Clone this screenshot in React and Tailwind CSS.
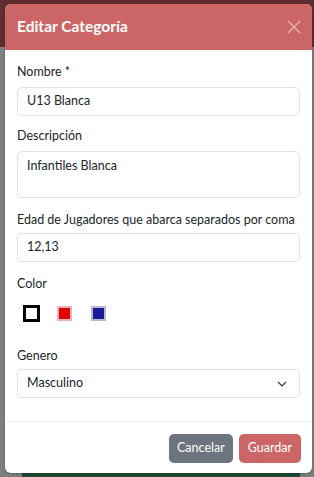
import React from "react";

export default function App() {
  return (
    <div className="relative w-[314px] h-[477px] overflow-hidden bg-[#7f7f7f] font-['Lato',sans-serif]">
      <div className="h-[47px] bg-[#5f2d2d]" />
      <div className="absolute left-[22px] right-[14px] bottom-0 h-[4px] bg-[#1f4a33]" />
      <div className="absolute left-[5px] top-[4px] w-[307px] h-[469px] bg-white rounded-[6px] overflow-hidden flex flex-col shadow-[0_1px_3px_rgba(0,0,0,0.25)]">
        <div className="h-[46px] bg-[#cc6666] flex items-center justify-between pl-[12px] pr-[10px] shrink-0">
          <span className="text-white font-bold text-[15.5px] leading-none">Editar Categoría</span>
          <svg width="14" height="14" viewBox="0 0 14 14" className="mr-[1px]">
            <path d="M1 1L13 13M13 1L1 13" stroke="#e9b3b3" strokeWidth="1.4" />
          </svg>
        </div>
        <div className="flex flex-col px-[12px] pt-[12px] text-[12.5px] text-[#212529]">
          <label className="leading-[20px]">Nombre *</label>
          <div className="mt-[5px] h-[29px] border border-[#dee2e6] rounded-[5px] px-[9px] flex items-center">U13 Blanca</div>
          <label className="mt-[10px] leading-[20px]">Descripción</label>
          <div className="mt-[5px] h-[47px] border border-[#dee2e6] rounded-[5px] px-[9px] pt-[5px]">Infantiles Blanca</div>
          <label className="mt-[12px] leading-[20px]">Edad de Jugadores que abarca separados por coma</label>
          <div className="mt-[3px] h-[29px] border border-[#dee2e6] rounded-[5px] px-[9px] flex items-center">12,13</div>
          <label className="mt-[12px] leading-[20px]">Color</label>
          <div className="mt-[11px] flex items-center h-[17px] pl-[6px]">
            <div className="w-[17px] h-[17px] border-[3px] border-black bg-white" />
            <div className="ml-[17px] w-[15px] h-[15px] border-2 border-[#e8b4b4] bg-[#e00000]" />
            <div className="ml-[19px] w-[15px] h-[15px] border-2 border-[#b8b8d0] bg-[#1a1a99]" />
          </div>
          <label className="mt-[24px] leading-[20px]">Genero</label>
          <div className="mt-[3px] h-[29px] border border-[#dee2e6] rounded-[5px] pl-[9px] pr-[12px] flex items-center justify-between">
            <span>Masculino</span>
            <svg width="10" height="6" viewBox="0 0 10 6">
              <path d="M1 1L5 5L9 1" stroke="#333" strokeWidth="1.2" fill="none" />
            </svg>
          </div>
        </div>
        <div className="mt-[23px] border-t border-[#eceeef]" />
        <div className="flex justify-end gap-[6px] px-[11px] pt-[12px]">
          <button className="h-[29px] px-[8px] rounded-[5px] bg-[#6c757d] text-white text-[12.5px]">Cancelar</button>
          <button className="h-[29px] px-[9px] rounded-[5px] bg-[#cc6666] text-white text-[12.5px]">Guardar</button>
        </div>
      </div>
    </div>
  );
}
